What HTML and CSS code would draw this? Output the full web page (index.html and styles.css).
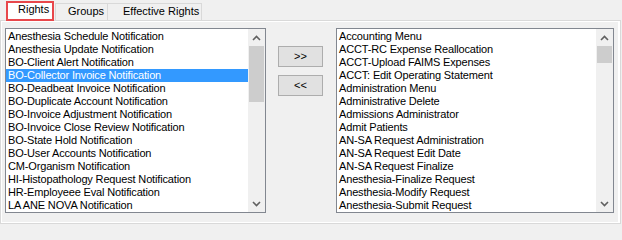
FILE: index.html
```html
<!DOCTYPE html>
<html>
<head>
<meta charset="utf-8">
<link rel="stylesheet" href="styles.css">
</head>
<body>
<div class="win">
  <div class="tabs">
    <div class="tab active">Rights</div>
    <div class="tab groups">Groups</div>
    <div class="tab eff">Effective Rights</div>
  </div>
  <div class="panel">
    <div class="page">
      <div class="listbox left">
        <div class="items">
          <div class="item">Anesthesia Schedule Notification</div>
          <div class="item">Anesthesia Update Notification</div>
          <div class="item">BO-Client Alert Notification</div>
          <div class="item sel">BO-Collector Invoice Notification</div>
          <div class="item">BO-Deadbeat Invoice Notification</div>
          <div class="item">BO-Duplicate Account Notification</div>
          <div class="item">BO-Invoice Adjustment Notification</div>
          <div class="item">BO-Invoice Close Review Notification</div>
          <div class="item">BO-State Hold Notification</div>
          <div class="item">BO-User Accounts Notification</div>
          <div class="item">CM-Organism Notification</div>
          <div class="item">HI-Histopathology Request Notification</div>
          <div class="item">HR-Employeee Eval Notification</div>
          <div class="item">LA ANE NOVA Notification</div>
        </div>
        <div class="vscroll">
          <div class="arrow"><svg width="9" height="6" viewBox="0 0 9 6"><polyline points="1,5 4.5,1.5 8,5" fill="none" stroke="#606060" stroke-width="1.6"/></svg></div>
          <div class="track"><div class="thumb big"></div></div>
          <div class="arrow"><svg width="9" height="6" viewBox="0 0 9 6"><polyline points="1,1 4.5,4.5 8,1" fill="none" stroke="#606060" stroke-width="1.6"/></svg></div>
        </div>
      </div>
      <div class="buttons">
        <div class="btn">&gt;&gt;</div>
        <div class="btn">&lt;&lt;</div>
      </div>
      <div class="listbox right">
        <div class="items">
          <div class="item">Accounting Menu</div>
          <div class="item">ACCT-RC Expense Reallocation</div>
          <div class="item">ACCT-Upload FAIMS Expenses</div>
          <div class="item">ACCT: Edit Operating Statement</div>
          <div class="item">Administration Menu</div>
          <div class="item">Administrative Delete</div>
          <div class="item">Admissions Administrator</div>
          <div class="item">Admit Patients</div>
          <div class="item">AN-SA Request Administration</div>
          <div class="item">AN-SA Request Edit Date</div>
          <div class="item">AN-SA Request Finalize</div>
          <div class="item">Anesthesia-Finalize Request</div>
          <div class="item">Anesthesia-Modify Request</div>
          <div class="item">Anesthesia-Submit Request</div>
        </div>
        <div class="vscroll">
          <div class="arrow"><svg width="9" height="6" viewBox="0 0 9 6"><polyline points="1,5 4.5,1.5 8,5" fill="none" stroke="#606060" stroke-width="1.6"/></svg></div>
          <div class="track"><div class="thumb small"></div></div>
          <div class="arrow"><svg width="9" height="6" viewBox="0 0 9 6"><polyline points="1,1 4.5,4.5 8,1" fill="none" stroke="#606060" stroke-width="1.6"/></svg></div>
        </div>
      </div>
    </div>
  </div>
</div>
</body>
</html>
```
FILE: styles.css
```css
* { box-sizing: border-box; }
html, body { margin: 0; padding: 0; }
body {
  background: #f0f0f0;
  font-family: "Liberation Sans", Arial, sans-serif;
  font-size: 11px;
  line-height: 13px;
  color: #000;
  width: 622px;
  height: 224px;
  overflow: hidden;
}
.win { display: flex; flex-direction: column; }
.tabs {
  display: flex;
  align-items: flex-start;
  height: 21px;
  padding-left: 6px;
  margin-bottom: -1px;
  position: relative;
  z-index: 1;
}
.tab {
  margin-top: 3px;
  height: 17px;
  border: 1px solid #d9d9d9;
  border-bottom: none;
  padding-top: 1px;
  background: #f0f0f0;
  white-space: nowrap;
}
.tab.active {
  margin-top: 1px;
  height: 20px;
  width: 48px;
  border: 2px solid #e8474b;
  background: #ffffff;
  padding: 0 0 0 10px;
}
.tab.groups { margin-left: 1px; width: 53px; padding-left: 12px; }
.tab.eff { width: 94px; border-left: none; padding-left: 15px; }
.panel {
  width: 621px;
  height: 204px;
  border: 1px solid #d9d9d9;
  background: #ffffff;
  padding: 1px 2px 1px 1px;
}
.page {
  background: #f0f0f0;
  height: 100%;
  display: flex;
  align-items: flex-start;
  padding: 6px 0 0 3px;
}
.listbox {
  height: 185px;
  border: 1px solid #828790;
  background: #fff;
  display: flex;
}
.listbox.left { width: 261px; }
.listbox.right { width: 278px; }
.items {
  flex: 1;
  padding-top: 1px;
  letter-spacing: -0.16px;
}
.item { height: 13px; padding-left: 2px; white-space: nowrap; overflow: hidden; }
.item.sel { background: #3399ff; color: #fff; }
.vscroll {
  width: 17px;
  background: #f0f0f0;
  display: flex;
  flex-direction: column;
}
.arrow {
  height: 17px;
  display: flex;
  align-items: center;
  justify-content: center;
}
.track { flex: 1; padding: 0 1px; }
.thumb { background: #cdcdcd; }
.thumb.big { height: 56px; }
.thumb.small { height: 17px; }
.buttons {
  display: flex;
  flex-direction: column;
  gap: 8px;
  margin: 18px 13px 0 12px;
}
.btn {
  width: 45px;
  height: 21px;
  background: #e1e1e1;
  border: 1px solid #adadad;
  display: flex;
  align-items: center;
  justify-content: center;
}
```
